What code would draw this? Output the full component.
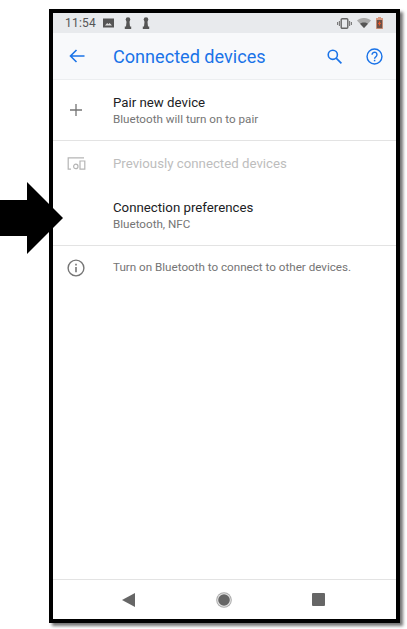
<script lang="ts">
	// static screen, nothing to compute
</script>

<div class="page">
	<svg class="pointer" viewBox="0 0 63 72" width="63" height="72" aria-hidden="true">
		<path d="M0 18H27V0L63 36 27 72V54H0Z" fill="#000" />
	</svg>

	<div class="phone">
		<div class="status">
			<span class="time">11:54</span>
			<svg class="s-icon" viewBox="0 0 11 10" width="11" height="10" aria-hidden="true">
				<path d="M0 .5h11v9H0Z" fill="#555" />
				<path d="M2 7.5l2.2-2.4 1.2 1.2 1.2-1.2 2.4 2.4Z" fill="#ddd" />
			</svg>
			<svg class="s-icon" viewBox="0 0 8 12" width="8" height="12" aria-hidden="true">
				<circle cx="4" cy="2.6" r="2.3" fill="#555" />
				<path d="M2.6 4h2.8L6 9.5H7.2V12H.8V9.5H2Z" fill="#555" />
			</svg>
			<svg class="s-icon" viewBox="0 0 8 12" width="8" height="12" aria-hidden="true">
				<circle cx="4" cy="2.6" r="2.3" fill="#555" />
				<path d="M2.6 4h2.8L6 9.5H7.2V12H.8V9.5H2Z" fill="#555" />
			</svg>
			<span class="spacer"></span>
			<svg viewBox="0 0 15 11" width="15" height="11" aria-hidden="true">
				<rect x="4.2" y=".7" width="6.6" height="9.6" rx="1" fill="none" stroke="#666" stroke-width="1.4" />
				<path d="M2.4 3v5M.6 4v3M12.6 3v5M14.4 4v3" stroke="#777" stroke-width="1.1" />
			</svg>
			<svg class="wifi" viewBox="0 0 14 10" width="14" height="10" aria-hidden="true">
				<path d="M0 2.6C4-.9 10-.9 14 2.6L7 10Z" fill="#aaa" />
				<path d="M3 5.8C5.3 4 8.7 4 11 5.8L7 10Z" fill="#555" />
			</svg>
			<svg viewBox="0 0 7 12" width="7" height="12" aria-hidden="true">
				<path d="M2 0h3v1h2v11H0V1h2Z" fill="#d99a80" />
				<path d="M.8 3h5.4v8.2H.8Z" fill="#6b5148" />
				<path d="M3.5 4.5v4M2 6.5h3" stroke="#e8562a" stroke-width="1.2" />
			</svg>
		</div>

		<header class="toolbar">
			<svg class="back" viewBox="0 0 16 14" width="16" height="14" fill="none" aria-hidden="true">
				<path d="M15.5 7H1.5M7.5 1 1.5 7l6 6" stroke="#1a73e8" stroke-width="1.6" />
			</svg>
			<h1>Connected devices</h1>
			<svg viewBox="0 0 16 16" width="15" height="15" fill="none" aria-hidden="true">
				<circle cx="6.2" cy="6.2" r="4.9" stroke="#1a73e8" stroke-width="1.7" />
				<path d="M9.8 9.8 15.4 15.4" stroke="#1a73e8" stroke-width="1.8" />
			</svg>
			<svg class="help" viewBox="0 0 18 18" width="17" height="17" fill="none" aria-hidden="true">
				<circle cx="9" cy="9" r="7.9" stroke="#1a73e8" stroke-width="1.5" />
				<path d="M6.4 7.1a2.6 2.6 0 1 1 4.2 2c-.9.7-1.5 1.1-1.5 2.3" stroke="#1a73e8" stroke-width="1.5" />
				<path d="M9.1 12.5v1.6" stroke="#1a73e8" stroke-width="1.6" />
			</svg>
		</header>

		<main class="list">
			<div class="row tall">
				<div class="icon">
					<svg viewBox="0 0 12 12" width="12" height="12" aria-hidden="true">
						<path d="M6 0v12M0 6h12" stroke="#757575" stroke-width="1.3" />
					</svg>
				</div>
				<div>
					<p class="title">Pair new device</p>
					<p class="sub">Bluetooth will turn on to pair</p>
				</div>
			</div>
			<div class="row mid ruled">
				<div class="icon">
					<svg viewBox="0 0 19 13" width="19" height="13" fill="none" aria-hidden="true">
						<path d="M4 12.2H1.2V.8H17M13 4h4.8v8.2H13Z" stroke="#b5b5b5" stroke-width="1.2" />
						<circle cx="8.8" cy="9.4" r="2.2" stroke="#b5b5b5" stroke-width="1.2" />
					</svg>
				</div>
				<p class="title off">Previously connected devices</p>
			</div>
			<div class="row tall">
				<div class="icon"></div>
				<div>
					<p class="title">Connection preferences</p>
					<p class="sub">Bluetooth, NFC</p>
				</div>
			</div>
			<div class="row info ruled">
				<div class="icon">
					<svg viewBox="0 0 18 18" width="18" height="18" fill="none" aria-hidden="true">
						<circle cx="9" cy="9" r="7.9" stroke="#757575" stroke-width="1.4" />
						<path d="M9 8v5.2M9 4.8v1.7" stroke="#757575" stroke-width="1.6" />
					</svg>
				</div>
				<p class="sub raised">Turn on Bluetooth to connect to other devices.</p>
			</div>
		</main>

		<nav class="nav">
			<svg viewBox="0 0 13 14" width="13" height="14" aria-hidden="true">
				<path d="M0 7 13 0V14Z" fill="#666" />
			</svg>
			<svg viewBox="0 0 16 16" width="16" height="16" aria-hidden="true">
				<circle cx="8" cy="8" r="7.8" fill="#aaa" />
				<circle cx="8" cy="8" r="6.8" fill="#e8e8e8" />
				<circle cx="8" cy="8" r="5.8" fill="#666" />
			</svg>
			<svg viewBox="0 0 13 13" width="13" height="13" aria-hidden="true">
				<rect width="13" height="13" rx="1" fill="#666" />
			</svg>
		</nav>
	</div>
</div>

<style>
	:global(body) {
		background: #fff;
		font-family: Roboto, "Liberation Sans", sans-serif;
	}

	.page {
		position: relative;
		width: 407px;
		height: 629px;
		padding: 9px 0 0 49px;
		box-sizing: border-box;
		overflow: hidden;
	}

	.pointer {
		position: absolute;
		left: 0;
		top: 182px;
		z-index: 2;
	}

	.phone {
		display: flex;
		flex-direction: column;
		width: 351px;
		height: 614px;
		box-sizing: border-box;
		border: 4px solid #000;
		background: #fff;
		box-shadow: 3px 3px 3px rgba(0, 0, 0, 0.55);
	}

	.status {
		display: flex;
		align-items: center;
		height: 20px;
		padding: 0 13px 0 12px;
		background: #e8eaed;
	}

	.time {
		margin-right: 7px;
		font-size: 12px;
		letter-spacing: 0.2px;
		color: #555;
	}

	.s-icon {
		margin-right: 10px;
	}

	.spacer {
		flex: 1;
	}

	.wifi {
		margin: 0 5px;
	}

	.toolbar {
		display: flex;
		align-items: center;
		height: 47px;
		box-sizing: border-box;
		padding: 0 13px 0 16px;
		background: #f8f9fb;
		border-bottom: 1px solid #eceef0;
	}

	.toolbar h1 {
		flex: 1;
		margin: 0 0 0 28px;
		font-size: 18.1px;
		font-weight: 400;
		color: #1a73e8;
	}

	.help {
		margin-left: 24px;
	}

	.list {
		flex: 1;
	}

	.row {
		display: flex;
		align-items: center;
		box-sizing: border-box;
	}

	.tall {
		height: 60px;
	}

	.mid {
		height: 45px;
	}

	.info {
		height: 44px;
	}

	.ruled {
		border-top: 1px solid #e3e3e3;
	}

	.icon {
		display: flex;
		justify-content: center;
		width: 46px;
		margin-right: 14px;
	}

	p {
		margin: 0;
	}

	.title {
		font-size: 13.25px;
		line-height: 20px;
		margin-bottom: -2px;
		color: #202124;
	}

	.title.off {
		margin-bottom: 0;
		padding-top: 2px;
		color: #bdbdbd;
	}

	.sub {
		font-size: 11.65px;
		line-height: 16px;
		color: #757575;
	}

	.sub.raised {
		margin-bottom: 2px;
	}

	.nav {
		display: flex;
		align-items: center;
		justify-content: space-between;
		height: 40px;
		box-sizing: border-box;
		padding: 0 71px 0 69px;
		border-top: 1px solid #e3e3e3;
	}
</style>
